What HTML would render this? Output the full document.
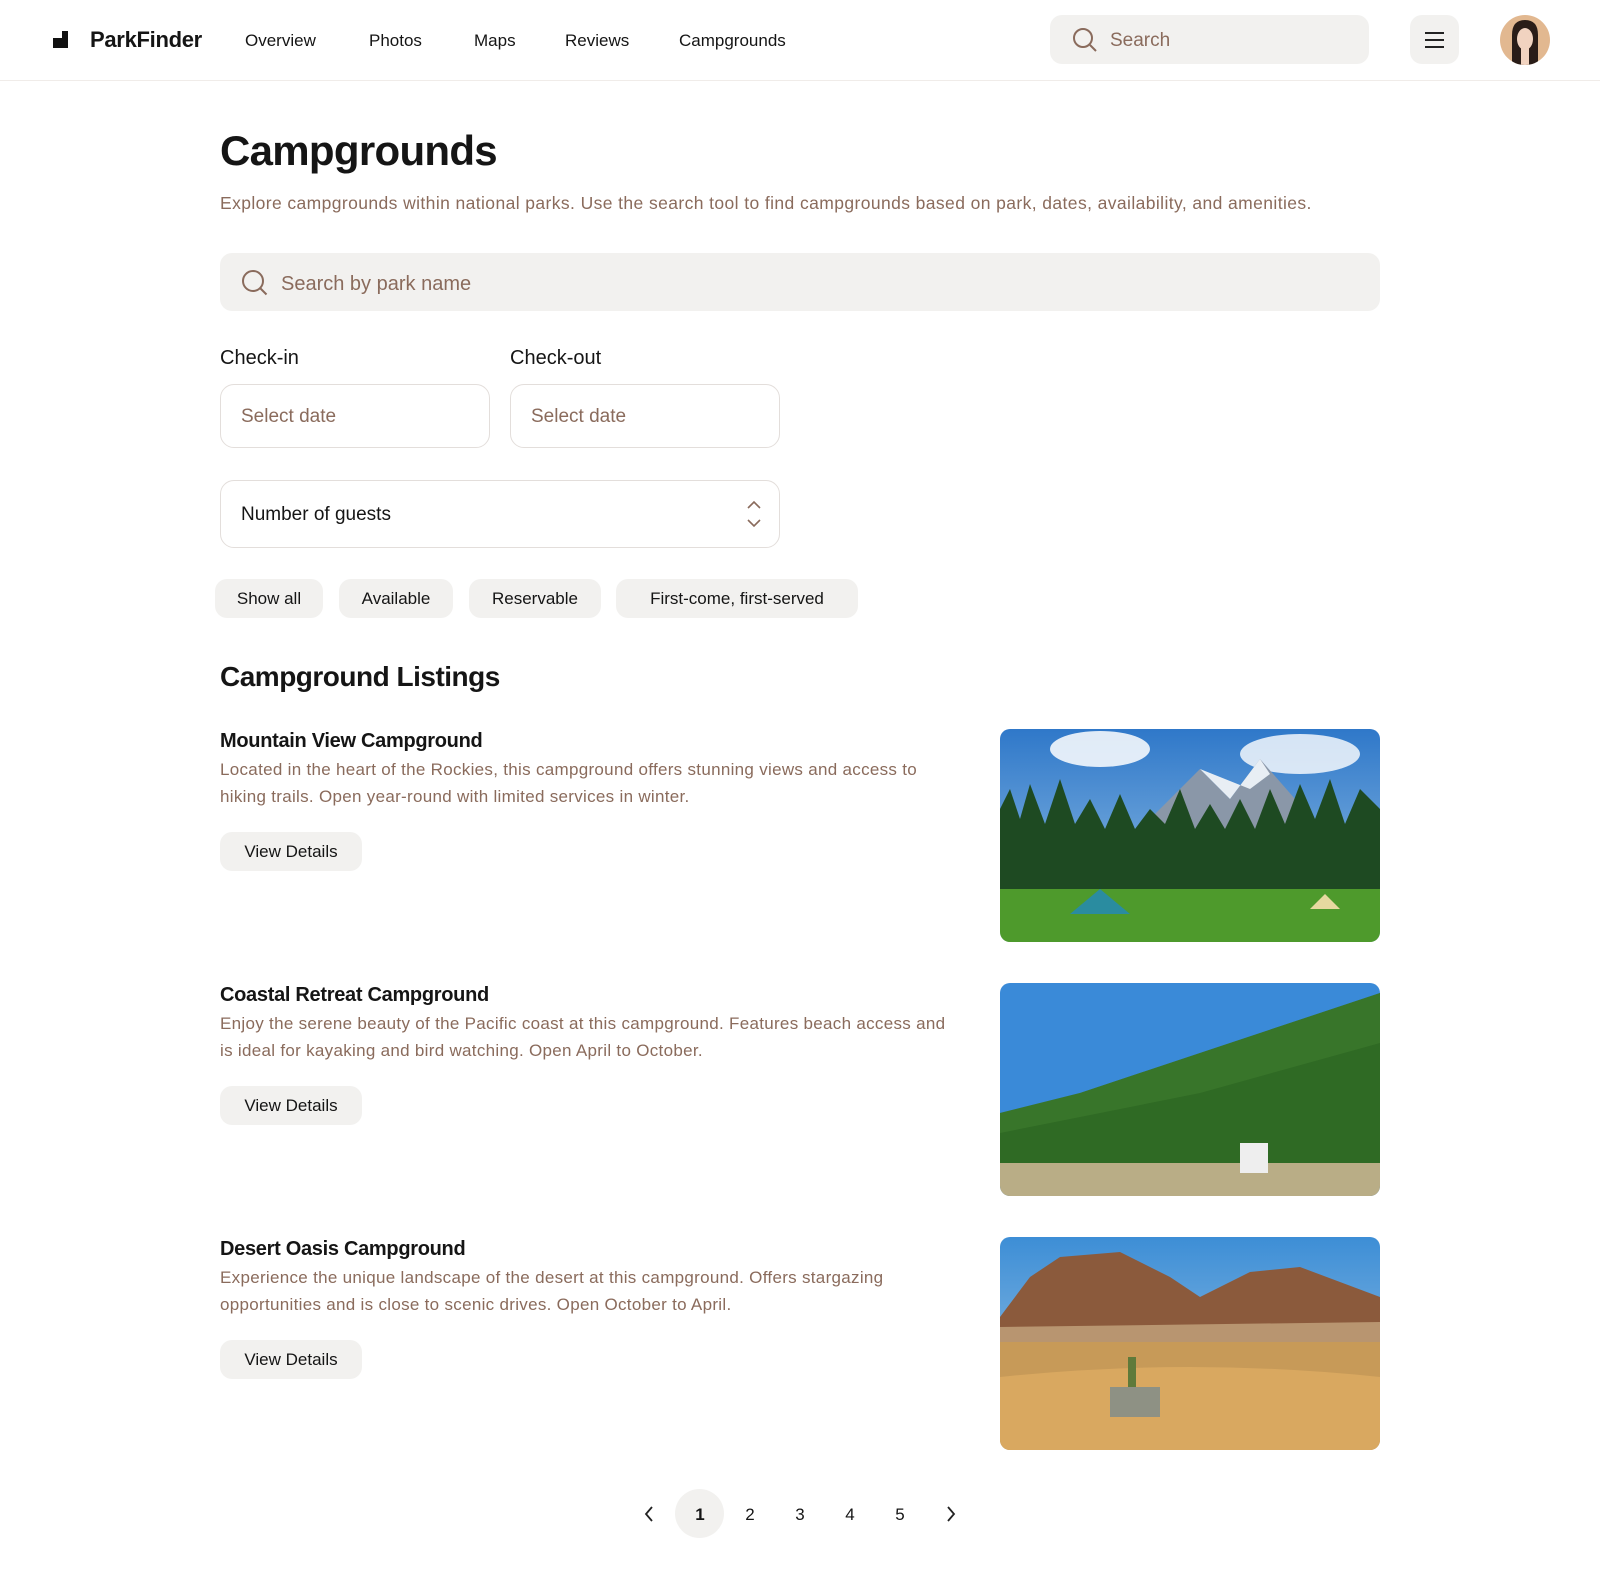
<!DOCTYPE html>
<html><head><meta charset="utf-8"><style>
*{box-sizing:border-box;margin:0;padding:0}
body{width:1600px;height:1585px;background:#fff;font-family:"Liberation Sans",sans-serif;color:#151515;position:relative;overflow:hidden}
.a{position:absolute}
.nav{font-size:17px;top:31px}
.brown{color:#8a6b5c}
.chip{position:absolute;top:579px;height:39px;background:#f2f1ef;border-radius:12px;font-size:17px;line-height:39px;text-align:center}
.box{position:absolute;border:1.5px solid #e3dedb;border-radius:14px;font-size:19px;line-height:1}
.t{position:absolute;left:220px;font-size:20px;font-weight:bold;letter-spacing:-0.3px}
.d{position:absolute;left:220px;width:800px;font-size:17px;line-height:26.5px;color:#8a6b5c;letter-spacing:0.3px;white-space:nowrap}
.btn{position:absolute;left:220px;width:142px;height:39px;background:#f2f1ef;border-radius:12px;font-size:17px;line-height:39px;text-align:center}
.img{position:absolute;left:1000px;width:380px;height:213px;border-radius:10px;overflow:hidden}
.pg{position:absolute;top:1505px;font-size:17px;width:30px;text-align:center}
</style></head><body>
<div class="a" style="left:0;top:80px;width:1600px;height:1px;background:#f0ece9"></div>
<svg class="a" style="left:53px;top:31px" width="15" height="17"><path d="M5 0h10v17H5z M0 7h5v10H0z" fill="#111"/><rect x="5" y="0" width="4" height="7" fill="#fff"/></svg>
<div class="a" style="left:90px;top:27px;font-size:22px;font-weight:bold;letter-spacing:-0.3px">ParkFinder</div>
<div class="a nav" style="left:245px">Overview</div>
<div class="a nav" style="left:369px">Photos</div>
<div class="a nav" style="left:474px">Maps</div>
<div class="a nav" style="left:565px">Reviews</div>
<div class="a nav" style="left:679px">Campgrounds</div>
<div class="a" style="left:1050px;top:15px;width:319px;height:49px;background:#f2f1ef;border-radius:12px"></div>
<svg class="a" style="left:1072px;top:27px" width="26" height="26"><circle cx="11" cy="11" r="9" fill="none" stroke="#8a6b5c" stroke-width="2"/><path d="M18 18l6 6" stroke="#8a6b5c" stroke-width="2"/></svg>
<div class="a brown" style="left:1110px;top:30px;font-size:19px">Search</div>
<div class="a" style="left:1410px;top:15px;width:49px;height:49px;background:#f2f1ef;border-radius:12px"></div>
<svg class="a" style="left:1425px;top:32px" width="19" height="16"><path d="M0 1h19M0 8h19M0 15h19" stroke="#222" stroke-width="2"/></svg>
<svg class="a" style="left:1500px;top:15px" width="50" height="50"><defs><clipPath id="c"><circle cx="25" cy="25" r="25"/></clipPath></defs><g clip-path="url(#c)"><rect width="50" height="50" fill="#e2b890"/><path d="M12 50V20Q12 5 25 5Q38 5 38 20V50z" fill="#2a1d18"/><ellipse cx="25" cy="24" rx="8" ry="11" fill="#f1d3c0"/><rect x="21" y="33" width="8" height="17" fill="#f1d3c0"/></g></svg>

<div class="a" style="left:220px;top:127px;font-size:42px;font-weight:bold;letter-spacing:-0.7px">Campgrounds</div>
<div class="a brown" style="left:220px;top:193px;font-size:17.5px;letter-spacing:0.4px">Explore campgrounds within national parks. Use the search tool to find campgrounds based on park, dates, availability, and amenities.</div>
<div class="a" style="left:220px;top:253px;width:1160px;height:58px;background:#f2f1ef;border-radius:12px"></div>
<svg class="a" style="left:241px;top:269px" width="28" height="28"><circle cx="12" cy="12" r="10" fill="none" stroke="#8a6b5c" stroke-width="2"/><path d="M19.5 19.5l6 6" stroke="#8a6b5c" stroke-width="2"/></svg>
<div class="a brown" style="left:281px;top:273px;font-size:20px">Search by park name</div>
<div class="a" style="left:220px;top:347px;font-size:20px">Check-in</div>
<div class="a" style="left:510px;top:347px;font-size:20px">Check-out</div>
<div class="box" style="left:220px;top:384px;width:270px;height:64px;padding:22px 0 0 20px;color:#8a6b5c">Select date</div>
<div class="box" style="left:510px;top:384px;width:270px;height:64px;padding:22px 0 0 20px;color:#8a6b5c">Select date</div>
<div class="box" style="left:220px;top:480px;width:560px;height:68px;padding:24px 0 0 20px">Number of guests</div>
<svg class="a" style="left:746px;top:500px" width="16" height="28"><path d="M2 8l6-6 6 6M2 20l6 6 6-6" fill="none" stroke="#8a6b5c" stroke-width="1.6"/></svg>
<div class="chip" style="left:215px;width:108px">Show all</div>
<div class="chip" style="left:339px;width:114px">Available</div>
<div class="chip" style="left:469px;width:132px">Reservable</div>
<div class="chip" style="left:616px;width:242px">First-come, first-served</div>
<div class="a" style="left:220px;top:661px;font-size:28px;font-weight:bold;letter-spacing:-0.5px">Campground Listings</div>

<div class="t" style="top:730px">Mountain View Campground</div>
<div class="d" style="top:757px">Located in the heart of the Rockies, this campground offers stunning views and access to<br>hiking trails. Open year-round with limited services in winter.</div>
<div class="btn" style="top:832px">View Details</div>
<div class="img" style="top:729px"><svg width="380" height="213"><defs><linearGradient id="s1" x1="0" y1="0" x2="0" y2="1"><stop offset="0" stop-color="#2f78c9"/><stop offset="1" stop-color="#9cc6e8"/></linearGradient></defs><rect width="380" height="213" fill="url(#s1)"/><ellipse cx="100" cy="20" rx="50" ry="18" fill="#fff" opacity=".85"/><ellipse cx="300" cy="25" rx="60" ry="20" fill="#fff" opacity=".8"/><path d="M120 120L200 40L230 70L260 30L330 110z" fill="#8a97a8"/><path d="M200 40L215 55L230 70L260 30L270 45L250 60z" fill="#e8eef4"/><path d="M0 170L0 80L10 60L20 90L30 55L45 95L60 50L75 95L90 70L105 100L120 65L135 100L150 80L165 95L180 60L195 100L210 75L225 100L240 70L255 100L270 60L285 95L300 55L315 90L330 50L345 95L360 60L380 80V170z" fill="#1e4a22"/><rect y="160" width="380" height="53" fill="#4e9a2c"/><path d="M70 185L100 160L130 185z" fill="#2a8ca0"/><path d="M310 180L325 165L340 180z" fill="#e6d9a0"/></svg></div>

<div class="t" style="top:984px">Coastal Retreat Campground</div>
<div class="d" style="top:1011px">Enjoy the serene beauty of the Pacific coast at this campground. Features beach access and<br>is ideal for kayaking and bird watching. Open April to October.</div>
<div class="btn" style="top:1086px">View Details</div>
<div class="img" style="top:983px"><svg width="380" height="213"><rect width="380" height="213" fill="#3a8ad8"/><path d="M0 130L80 110L200 70L380 10V180H0z" fill="#2f6a24"/><path d="M0 130L80 110L200 70L380 10V60L200 110L0 150z" fill="#3f7d2e" opacity=".6"/><rect y="180" width="380" height="33" fill="#b9ad86"/><rect x="240" y="160" width="28" height="30" fill="#eee"/></svg></div>

<div class="t" style="top:1238px">Desert Oasis Campground</div>
<div class="d" style="top:1265px">Experience the unique landscape of the desert at this campground. Offers stargazing<br>opportunities and is close to scenic drives. Open October to April.</div>
<div class="btn" style="top:1340px">View Details</div>
<div class="img" style="top:1237px"><svg width="380" height="213"><defs><linearGradient id="s3" x1="0" y1="0" x2="0" y2="1"><stop offset="0" stop-color="#3d8ed6"/><stop offset="1" stop-color="#a8cbe6"/></linearGradient></defs><rect width="380" height="213" fill="url(#s3)"/><path d="M0 80L30 40L60 20L120 15L170 40L200 60L250 35L300 30L380 60V100H0z" fill="#8b5a3c"/><path d="M0 90L380 85V110H0z" fill="#b89570"/><rect y="105" width="380" height="108" fill="#c79a58"/><path d="M0 140Q190 120 380 140V213H0z" fill="#d9a860"/><rect x="128" y="120" width="8" height="45" fill="#5f7a3a"/><rect x="110" y="150" width="50" height="30" fill="#8e9184"/></svg></div>

<svg class="a" style="left:643px;top:1505px" width="12" height="18"><path d="M9 2L3 9l6 7" fill="none" stroke="#222" stroke-width="1.8"/></svg>
<div class="a" style="left:675px;top:1489px;width:49px;height:49px;border-radius:50%;background:#f2f1ef"></div>
<div class="pg" style="left:685px;font-weight:bold">1</div>
<div class="pg" style="left:735px">2</div>
<div class="pg" style="left:785px">3</div>
<div class="pg" style="left:835px">4</div>
<div class="pg" style="left:885px">5</div>
<svg class="a" style="left:945px;top:1505px" width="12" height="18"><path d="M3 2l6 7-6 7" fill="none" stroke="#222" stroke-width="1.8"/></svg>
</body></html>
